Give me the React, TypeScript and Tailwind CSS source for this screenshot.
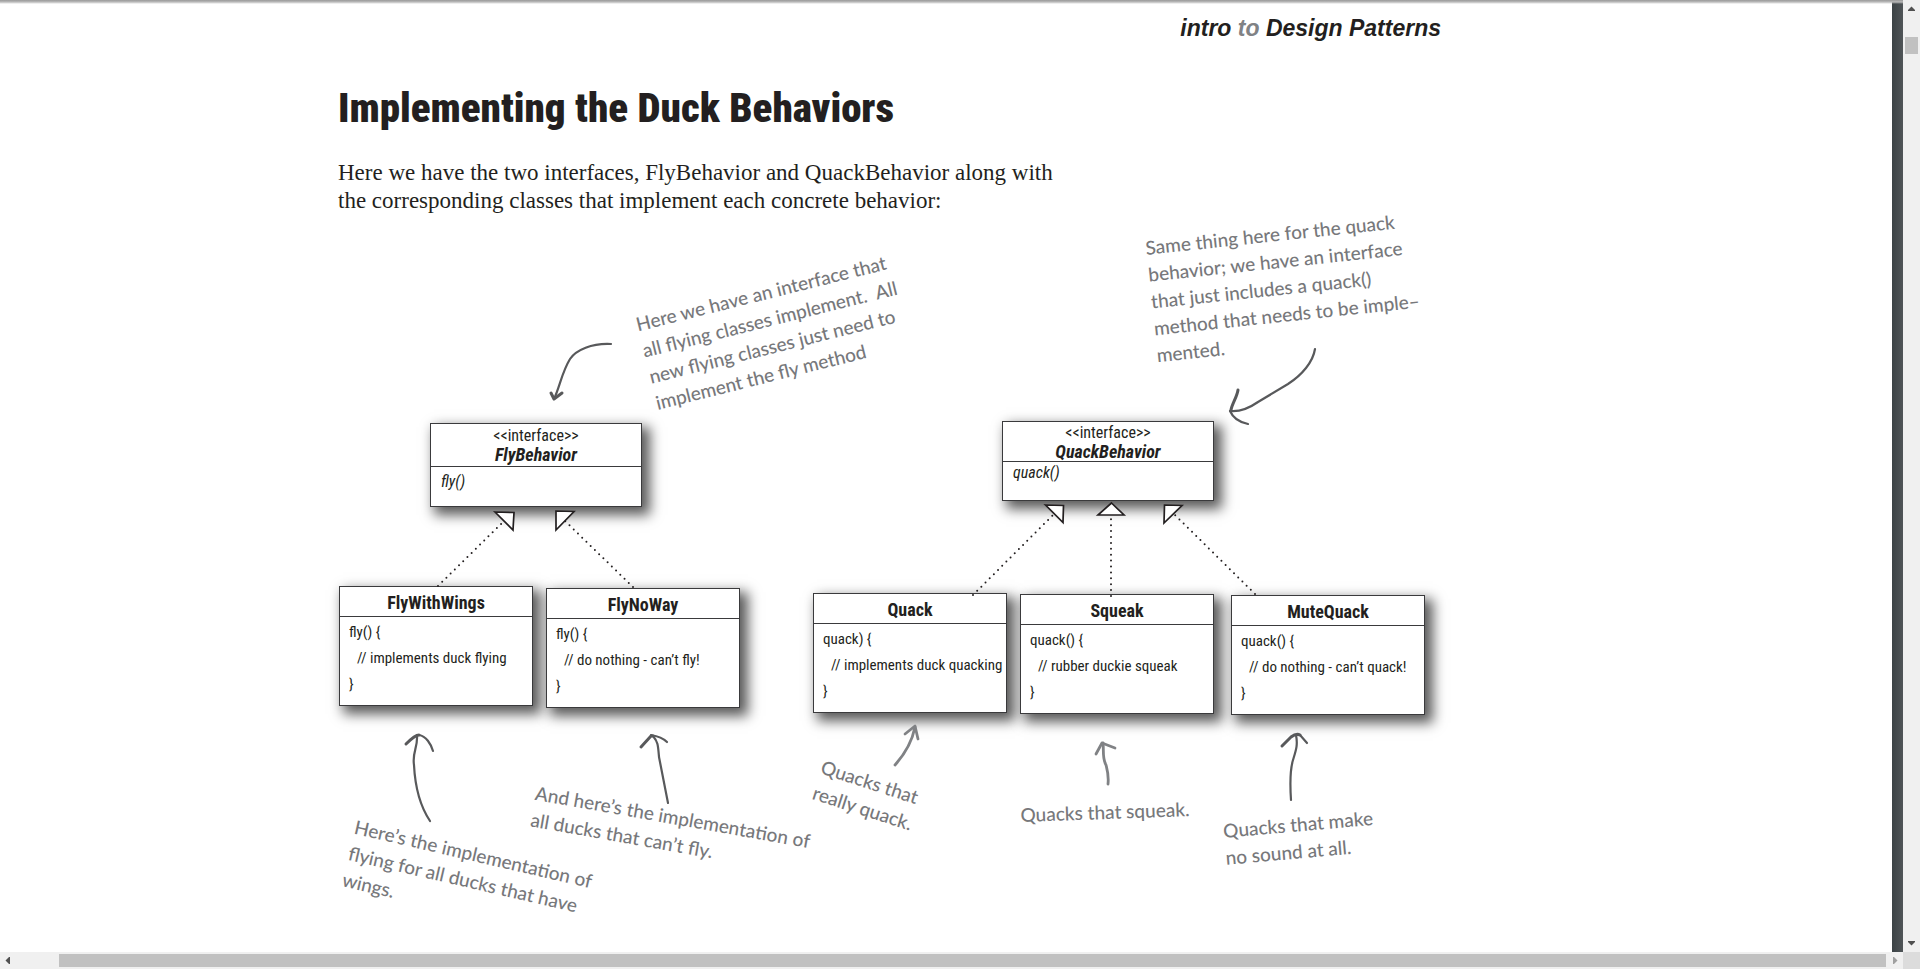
import React from "react";

type ClassCard = { name: string; place: string; lines: [string, string, string] };

const classCards: ClassCard[] = [
  { name: "FlyWithWings", place: "left-[1px] top-[371px]", lines: ["fly() {", "// implements duck flying", "}"] },
  { name: "FlyNoWay", place: "left-[208px] top-[373px]", lines: ["fly() {", "// do nothing - can’t fly!", "}"] },
  { name: "Quack", place: "left-[475px] top-[378px]", lines: ["quack) {", "// implements duck quacking", "}"] },
  { name: "Squeak", place: "left-[682px] top-[379px]", lines: ["quack() {", "// rubber duckie squeak", "}"] },
  { name: "MuteQuack", place: "left-[893px] top-[380px]", lines: ["quack() {", "// do nothing - can’t quack!", "}"] },
];

const interfaces = [
  { name: "FlyBehavior", method: "fly()", place: "left-[92px] top-[208px]", header: "h-[43px] pt-[2px]", body: "h-[39px] pt-[5px]" },
  { name: "QuackBehavior", method: "quack()", place: "left-[664px] top-[206px]", header: "h-[40px] pt-px", body: "h-[38px] pt-px" },
];

const notes = [
  { place: "left-[295px] top-[96px] -rotate-[14deg]", lines: ["Here we have an interface that", "all flying classes implement.  All", "new flying classes just need to", "implement the fly method"] },
  { place: "left-[806px] top-[19px] -rotate-[6deg]", lines: ["Same thing here for the quack", "behavior; we have an interface", "that just includes a quack()", "method that needs to be imple–", "mented."] },
  { place: "left-[488px] top-[538px] rotate-[18deg]", lines: ["Quacks that", "really quack."] },
  { place: "left-[682px] top-[586px] -rotate-[2deg]", lines: ["Quacks that squeak."] },
  { place: "left-[884px] top-[602px] -rotate-[5deg]", lines: ["Quacks that make", "no sound at all."] },
  { place: "left-[20px] top-[598px] rotate-[13deg]", lines: ["Here’s the implementation of", "flying for all ducks that have", "wings."] },
  { place: "left-[200px] top-[564px] rotate-[10deg]", lines: ["And here’s the implementation of", "all ducks that can’t fly."] },
];

const narrow = "font-['Roboto_Condensed','Roboto',sans-serif]";
const box = "absolute border border-[#3a3a3c] bg-white shadow-[6px_6px_12px_2px_#000000a6]";

function InterfaceBox({ item }: { item: (typeof interfaces)[number] }) {
  return (
    <section className={`${box} ${narrow} w-[212px] text-[16px] leading-[19px] ${item.place}`}>
      <header className={`border-b border-[#3a3a3c] text-center ${item.header}`}>
        <p>&lt;&lt;interface&gt;&gt;</p>
        <h2 className="text-[18px] font-bold italic">{item.name}</h2>
      </header>
      <p className={`pl-[10px] italic ${item.body}`}>{item.method}</p>
    </section>
  );
}

function ClassBox({ card }: { card: ClassCard }) {
  return (
    <section className={`${box} ${narrow} w-[194px] text-[15px] ${card.place}`}>
      <h2 className="h-[30px] border-b border-[#3a3a3c] text-center text-[18px] leading-[31px] font-bold">{card.name}</h2>
      <div className="pt-[2px] pb-[8px] pl-[9px] leading-[26px] whitespace-nowrap">
        <p>{card.lines[0]}</p>
        <p className="pl-2">{card.lines[1]}</p>
        <p>{card.lines[2]}</p>
      </div>
    </section>
  );
}

function Connectors() {
  return (
    <svg className="pointer-events-none absolute top-0 left-0 h-[737px] w-[1103px]" viewBox="338 215 1103 737" fill="none" aria-hidden="true">
      <g stroke="#231f20" strokeWidth="2" strokeLinecap="round" strokeDasharray="0 5.9">
        <path d="M438 586 L504 521" />
        <path d="M633 587 L565 521" />
        <path d="M973 595 L1053 515" />
        <path d="M1111 596 V517" />
        <path d="M1255 594 L1175 515" />
      </g>
      <g stroke="#231f20" strokeWidth="1.7" fill="#fff">
        <path d="M495 512 L514 512.5 L513 530 Z" />
        <path d="M556 511 L574 511.5 L556 530 Z" />
        <path d="M1045.500 505 L1063.500 505.500 L1063 522.500 Z" />
        <path d="M1111.500 503 L1124 515 H1098 Z" />
        <path d="M1164.500 505 L1182 505.500 L1164 523 Z" />
      </g>
      <g stroke="#58595b" strokeWidth="2.2" strokeLinecap="round" strokeLinejoin="round">
        <path d="M611 344 C592 343 576 350 570 359 C562 372 560 386 554 399" />
        <path d="M1315 349 C1313 362 1302 375 1288 384 L1258 402 C1248 409 1240 412 1230 411" />
        <path d="M1230 411 C1233 418 1238 422 1248 424" />
        <path d="M430 821 C420 806 415 785 414 765 C412 752 418 748 417 735" />
        <path d="M419 735 C426 736 431 744 433 751" />
        <path d="M668 803 L659 757 C658 745 658 742 653 736" />
        <path d="M651 735 C657 736 663 738 667 742" />
        <path d="M1291 800 C1290 785 1290 770 1293 760 C1296 750 1298 745 1296 735" />
        <path d="M1300 735 L1307 743" />
      </g>
      <g stroke="#58595b" strokeWidth="3" strokeLinecap="round" strokeLinejoin="round">
        <path d="M551 393 L554 399 L562 393" />
        <path d="M1238 390 C1237 397 1232 404 1231 410" />
        <path d="M406 744 C412 738 416 735 419 735" />
        <path d="M641 747 L651 736 H653" />
        <path d="M1282 746 L1291 737 C1295 734 1298 734 1300 735" />
      </g>
      <g stroke="#808285" strokeWidth="2.8" strokeLinecap="round" strokeLinejoin="round">
        <path d="M895 765 C904 755 912 742 915 727" />
        <path d="M905 734 L915 726 L918 739" />
        <path d="M1108 784 C1109 775 1107 769 1106 765 C1102 758 1104 750 1103 743" />
        <path d="M1096 754 L1102 743 L1115 748" />
      </g>
    </svg>
  );
}

function Arrow({ d, fill }: { d: string; fill: string }) {
  return (
    <svg width="17" height="17" viewBox="0 0 17 17" fill={fill} aria-hidden="true">
      <path d={d} />
    </svg>
  );
}

export default function App() {
  return (
    <div className="flex h-screen flex-col overflow-hidden bg-white text-[#231f20]">
      <div className="relative flex min-h-0 flex-1">
        <main className="min-w-0 flex-1 overflow-hidden pl-[338px]">
          <div className="w-[1103px]">
            <p className="pt-[14px] text-right font-['Liberation_Sans',sans-serif] text-[23px] leading-[28px] font-bold italic">
              intro <span className="text-[#808285]">to</span> Design Patterns
            </p>
            <h1 className={`mt-[40px] ${narrow} text-[41px] leading-[52px] font-black`}>Implementing the Duck Behaviors</h1>
            <p className="mt-[25px] font-['Liberation_Serif',serif] text-[23px] leading-[28px]">
              Here we have the two interfaces, FlyBehavior and QuackBehavior along with
              <br />
              the corresponding classes that implement each concrete behavior:
            </p>
            <div className="relative h-[737px]">
              {interfaces.map((item) => (
                <InterfaceBox key={item.name} item={item} />
              ))}
              {classCards.map((card) => (
                <ClassBox key={card.name} card={card} />
              ))}
              <Connectors />
              {notes.map((note) => (
                <div
                  key={note.lines[0]}
                  className={`absolute origin-top-left font-['Lato',sans-serif] text-[19px] leading-[27px] font-medium whitespace-pre text-[#77787b] ${note.place}`}
                >
                  {note.lines.map((line) => (
                    <p key={line}>{line}</p>
                  ))}
                </div>
              ))}
            </div>
          </div>
        </main>
        <div className="w-[11px] bg-linear-to-r from-[#3c4346] to-[#505558]" />
        <div className="absolute top-0 right-[17px] left-0 h-1 bg-linear-to-b from-[#999999] via-[#bbbbbb] to-transparent" />
        <div className="flex w-[17px] flex-col bg-[#f0f0f0]">
          <button aria-label="Scroll up" className="h-[17px]">
            <Arrow d="M5 11 H12 V10 L8.500 6.500 L5 10 Z" fill="#505050" />
          </button>
          <div className="mx-[2px] mt-5 h-[17px] bg-[#c1c1c1]" />
          <button aria-label="Scroll down" className="mt-auto h-[17px]">
            <Arrow d="M5 6 H12 V7 L8.500 10.500 L5 7 Z" fill="#505050" />
          </button>
        </div>
      </div>
      <div className="flex h-[17px] bg-[#f0f0f0]">
        <button aria-label="Scroll left" className="w-[17px]">
          <Arrow d="M10 5 V12 H9 L5.500 8.500 L9 5 Z" fill="#505050" />
        </button>
        <div className="my-[2px] ml-[42px] flex-1 bg-[#c1c1c1]" />
        <button aria-label="Scroll right" className="w-[17px]">
          <Arrow d="M7 5 V12 H8 L11.500 8.500 L8 5 Z" fill="#a0a0a0" />
        </button>
        <div className="w-[17px] bg-[#dcdcdc]" />
      </div>
    </div>
  );
}
